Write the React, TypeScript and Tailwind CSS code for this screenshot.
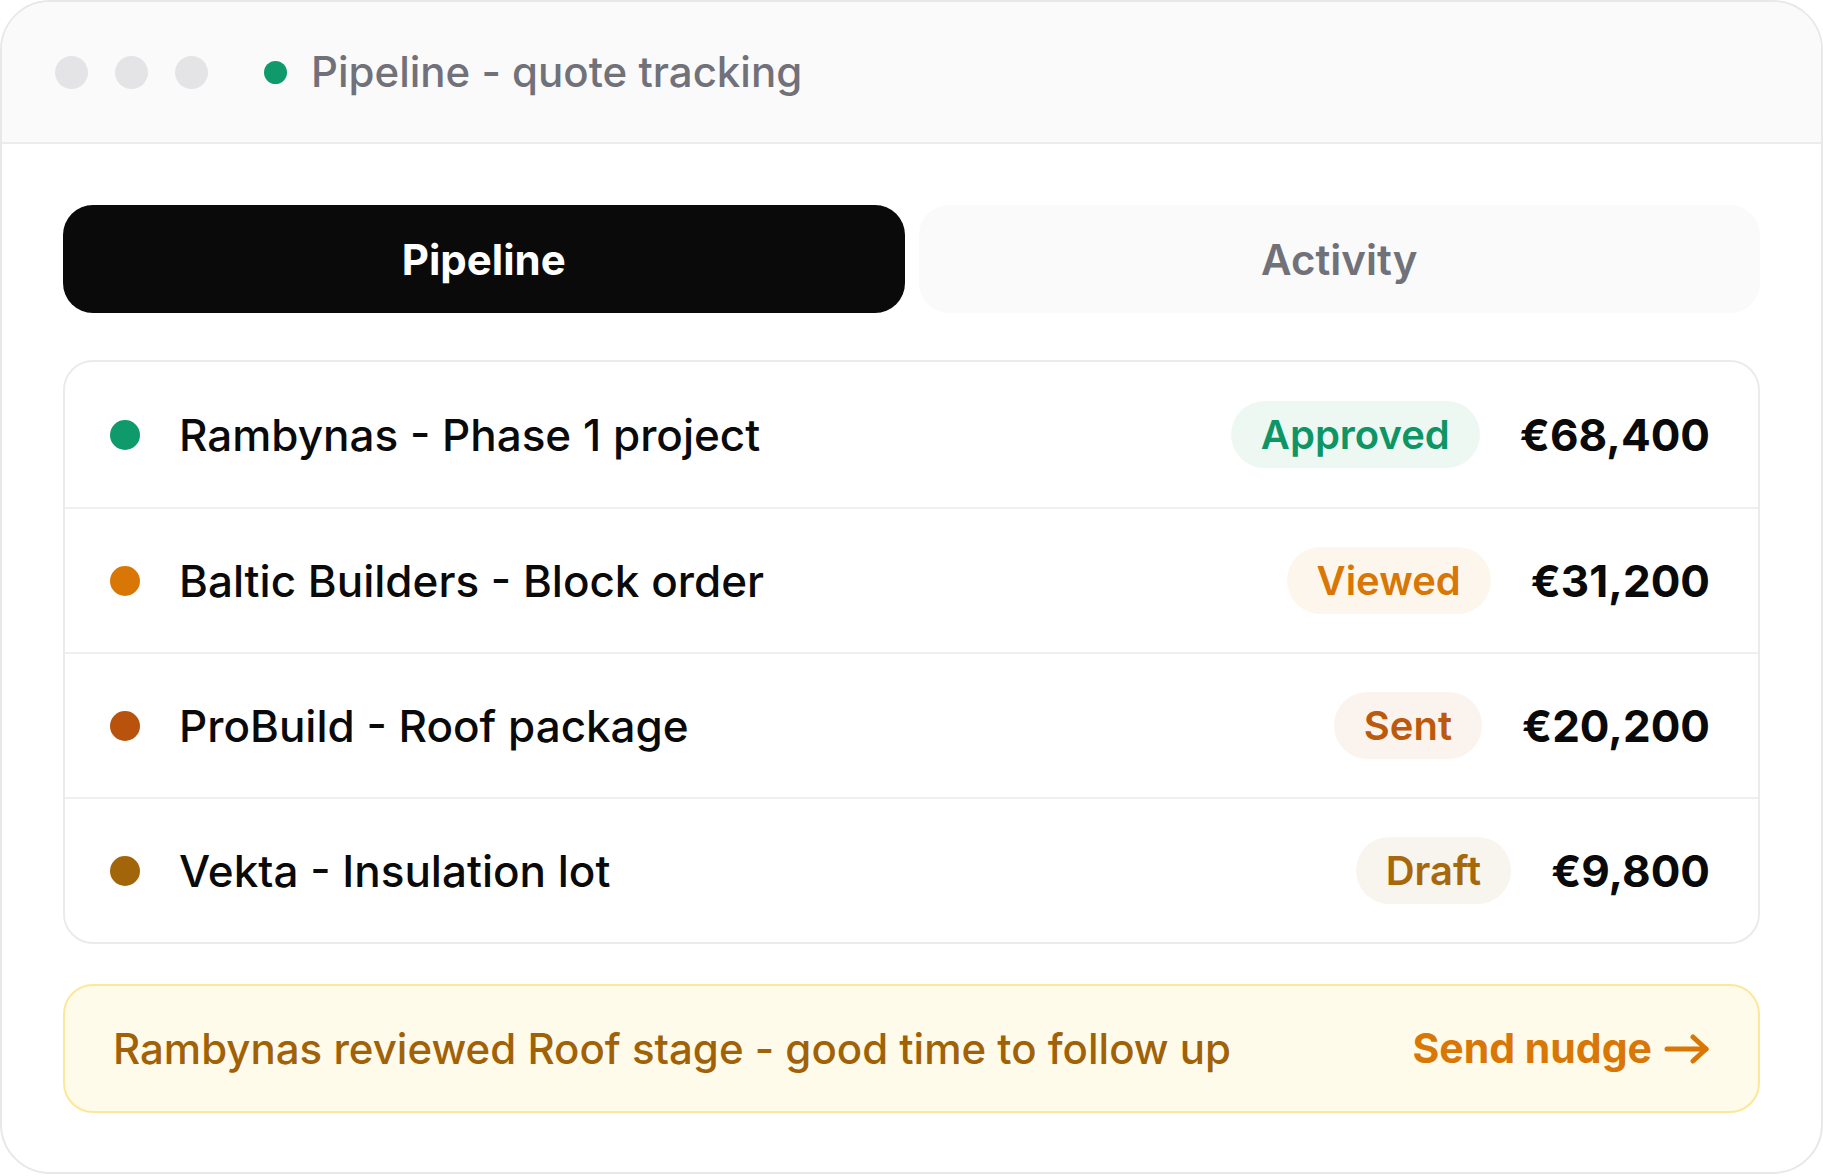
const rows = [
  {
    name: "Rambynas - Phase 1 project",
    status: "Approved",
    amount: "€68,400",
    dot: "bg-[#0e9a6b]",
    badge: "bg-[#edf8f3] text-[#0e9566]",
  },
  {
    name: "Baltic Builders - Block order",
    status: "Viewed",
    amount: "€31,200",
    dot: "bg-[#d97706]",
    badge: "bg-[#fdf6ec] text-[#d97706]",
  },
  {
    name: "ProBuild - Roof package",
    status: "Sent",
    amount: "€20,200",
    dot: "bg-[#b8520c]",
    badge: "bg-[#fbf4ee] text-[#bb5a0e]",
  },
  {
    name: "Vekta - Insulation lot",
    status: "Draft",
    amount: "€9,800",
    dot: "bg-[#a3650a]",
    badge: "bg-[#f8f5ee] text-[#a6680b]",
  },
];

export default function App() {
  return (
    <div
      className="w-[1823px] h-[1176px] bg-white"
      style={{ fontFamily: "Inter, 'Noto Sans', sans-serif" }}
    >
      <div className="h-[1174px] w-full overflow-hidden rounded-[50px] border-2 border-[#e8e8e8] bg-white">
        {/* Title bar */}
        <div className="flex h-[142px] items-center border-b-2 border-[#ececec] bg-[#fafafa] pl-[53px]">
          <div className="flex gap-[27px]">
            <span className="h-[33px] w-[33px] rounded-full bg-[#e4e4e7]" />
            <span className="h-[33px] w-[33px] rounded-full bg-[#e4e4e7]" />
            <span className="h-[33px] w-[33px] rounded-full bg-[#e4e4e7]" />
          </div>
          <span className="ml-[56px] h-[23px] w-[23px] rounded-full bg-[#0e9a6b]" />
          <span className="ml-[24px] text-[42px] font-medium leading-none text-[#71717a]">
            Pipeline - quote tracking
          </span>
        </div>

        <div className="px-[61px] pt-[61px]">
          {/* Tabs */}
          <div className="grid grid-cols-2 gap-[14px]">
            <div className="flex h-[108px] items-center justify-center rounded-[30px] bg-[#0a0a0a] text-[42px] font-bold text-white">
              Pipeline
            </div>
            <div className="flex h-[108px] items-center justify-center rounded-[30px] bg-[#fafafa] text-[42px] font-semibold text-[#71717a]">
              Activity
            </div>
          </div>

          {/* Quote list */}
          <div className="mt-[47px] overflow-hidden rounded-[30px] border-2 border-[#ebebeb]">
            {rows.map((r, i) => (
              <div
                key={r.name}
                className={`flex h-[145px] items-center pl-[45px] pr-[48px] ${
                  i > 0 ? "border-t-2 border-[#efefef]" : ""
                }`}
              >
                <span className={`h-[30px] w-[30px] shrink-0 rounded-full ${r.dot}`} />
                <span className="ml-[39px] text-[44px] font-medium leading-none text-[#0a0a0a]">
                  {r.name}
                </span>
                <span
                  className={`ml-auto flex h-[67px] items-center rounded-full px-[30px] text-[40px] font-semibold leading-none ${r.badge}`}
                >
                  {r.status}
                </span>
                <span className="ml-[40px] text-[44px] font-bold leading-none text-[#0a0a0a]">
                  {r.amount}
                </span>
              </div>
            ))}
          </div>

          {/* Nudge banner */}
          <div className="mt-[40px] flex h-[129px] items-center justify-between rounded-[30px] border-2 border-[#fce79a] bg-[#fffbea] px-[48px]">
            <span className="text-[42px] font-medium leading-none text-[#a16207]">
              Rambynas reviewed Roof stage - good time to follow up
            </span>
            <span className="flex items-center text-[41px] font-bold leading-none text-[#d97706]">
              Send nudge
              <svg
                className="ml-[12px]"
                width="46"
                height="30"
                viewBox="0 0 46 30"
                fill="none"
                stroke="currentColor"
                strokeWidth="5"
                strokeLinecap="round"
                strokeLinejoin="round"
              >
                <path d="M3 15H42" />
                <path d="M29 3L42 15L29 27" />
              </svg>
            </span>
          </div>
        </div>
      </div>
    </div>
  );
}
